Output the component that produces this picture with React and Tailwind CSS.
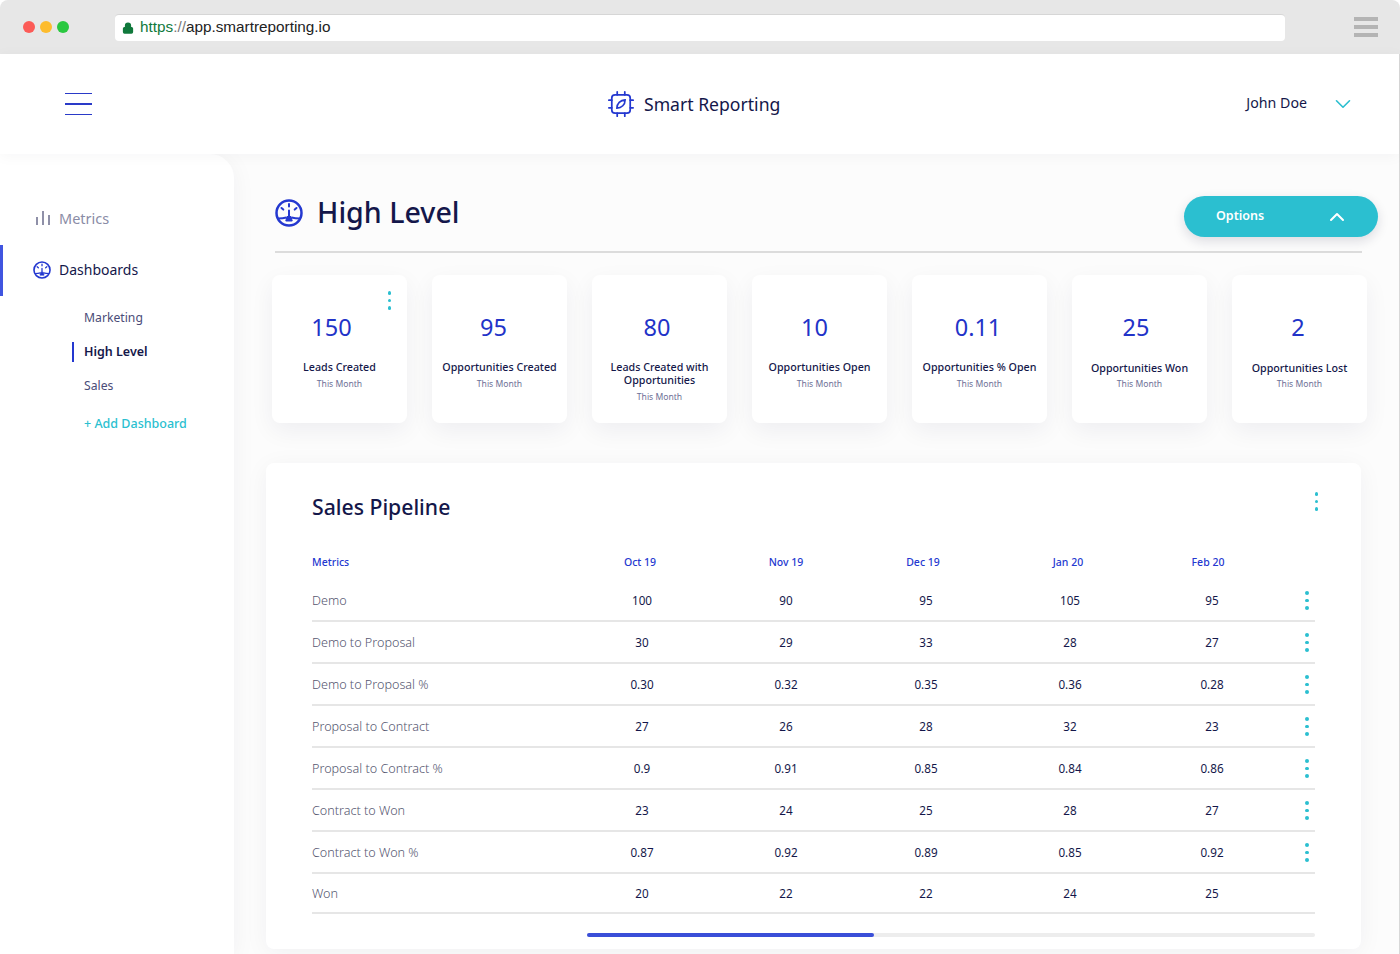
import { ChevronDown, ChevronUp, Lock } from 'lucide-react';

const STATS = [
  { value: '150', label: 'Leads Created', offset: 'mr-[16px]', menu: true },
  { value: '95', label: 'Opportunities Created', offset: 'mr-[12px]' },
  { value: '80', label: 'Leads Created with Opportunities', offset: 'mr-[5px]' },
  { value: '10', label: 'Opportunities Open', offset: 'mr-[10px]' },
  { value: '0.11', label: 'Opportunities % Open', offset: 'mr-[3px]' },
  { value: '25', label: 'Opportunities Won', offset: 'mr-[7px]', low: true },
  { value: '2', label: 'Opportunities Lost', offset: 'mr-[3px]', low: true },
];

const ROWS = [
  ['Demo', '100', '90', '95', '105', '95'],
  ['Demo to Proposal', '30', '29', '33', '28', '27'],
  ['Demo to Proposal %', '0.30', '0.32', '0.35', '0.36', '0.28'],
  ['Proposal to Contract', '27', '26', '28', '32', '23'],
  ['Proposal to Contract %', '0.9', '0.91', '0.85', '0.84', '0.86'],
  ['Contract to Won', '23', '24', '25', '28', '27'],
  ['Contract to Won %', '0.87', '0.92', '0.89', '0.85', '0.92'],
  ['Won', '20', '22', '22', '24', '25'],
];

const MONTHS = ['Oct 19', 'Nov 19', 'Dec 19', 'Jan 20', 'Feb 20'];

function Kebab({ className = '' }) {
  return (
    <div className={`flex flex-col gap-[4px] ${className}`}>
      <span className="block size-[3.5px] rounded-full bg-[#2bbfd0]" />
      <span className="block size-[3.5px] rounded-full bg-[#2bbfd0]" />
      <span className="block size-[3.5px] rounded-full bg-[#2bbfd0]" />
    </div>
  );
}

function GaugeIcon({ className = '' }) {
  return (
    <svg viewBox="0 0 28 28" fill="none" stroke="#2438d0" strokeWidth="2.5" className={className}>
      <circle cx="14" cy="14" r="12.5" />
      <path d="M14 5v2.5M6.5 9l1.8 1.6M21.5 9l-1.8 1.6M14 11.5v6" strokeLinecap="round" strokeWidth="2" />
      <path d="M3 19.5c3 0 6-.3 8.5-1M25 19.5c-3 0-6-.3-8.5-1" strokeWidth="2" />
      <path d="M12 17.5h4l1.2 4.5h-6.4z" fill="#2438d0" strokeWidth="1" strokeLinejoin="round" />
    </svg>
  );
}

function ChipIcon({ className = '' }) {
  return (
    <svg viewBox="0 0 24 24" fill="none" stroke="#2438d0" strokeWidth="1.6" strokeLinecap="round" className={className}>
      <rect x="3.5" y="3.5" width="17" height="17" rx="3" />
      <path d="M8.5 .8v2.7M15.5 .8v2.7M8.5 20.5v2.7M15.5 20.5v2.7M.8 8.5h2.7M.8 15.5h2.7M20.5 8.5h2.7M20.5 15.5h2.7" />
      <path d="M8.2 15.8c0-4.2 3.2-7.4 7.6-7.6 0 4.4-3.2 7.6-7.6 7.6z" strokeWidth="1.5" />
    </svg>
  );
}

function StatCard({ value, label, offset, menu, low }) {
  return (
    <div className="relative flex h-[148px] flex-col items-center rounded-lg bg-white px-2 pt-[35px] shadow-[0_8px_24px_rgba(20,20,60,0.06)]">
      {menu && <Kebab className="absolute right-[16px] top-[16px]" />}
      <div className={`text-[23.5px] leading-[34px] text-[#2233c8] ${offset}`}>{value}</div>
      <div className={`text-center text-[10.7px] font-medium leading-[13px] text-[#14174a] ${low ? 'mt-[18px]' : 'mt-[17px]'}`}>{label}</div>
      <div className={`text-[8.6px] leading-[13px] text-[#6e7096] ${low ? 'mt-[3px]' : 'mt-[4px]'}`}>This Month</div>
    </div>
  );
}

export default function App() {
  return (
    <div className="flex h-[954px] w-[1400px] flex-col overflow-hidden bg-white font-['Noto_Sans',sans-serif]">
      <div className="flex h-[54px] shrink-0 items-center rounded-t-lg bg-[#e7e7e7] font-['Liberation_Sans',sans-serif]">
        <div className="ml-[23px] flex gap-[5px]">
          <span className="size-[12px] rounded-full bg-[#fc5b57]" />
          <span className="size-[12px] rounded-full bg-[#fdbc2e]" />
          <span className="size-[12px] rounded-full bg-[#2ac840]" />
        </div>
        <div className="ml-[46px] flex h-[27px] w-[1170px] items-center rounded-[4px] border-t border-[#d6d6d6] bg-white pl-[7px]">
          <Lock size={12} strokeWidth={2.5} fill="#10793c" className="text-[#10793c]" />
          <span className="ml-[6px] text-[15.3px] text-[#10793c]">https</span>
          <span className="text-[15.3px] text-[#777]">://</span>
          <span className="text-[15.3px] text-[#222]">app.smartreporting.io</span>
        </div>
        <div className="ml-[69px] flex w-[24px] flex-col gap-[4px]">
          <span className="h-[4px] bg-[#b4b4b4]" />
          <span className="h-[4px] bg-[#b4b4b4]" />
          <span className="h-[4px] bg-[#b4b4b4]" />
        </div>
      </div>

      <div className="flex min-h-0 flex-1 flex-col border-r border-[#d8d8d8] bg-[#fcfcfc]">
        <header className="z-20 flex h-[100px] shrink-0 items-center bg-white shadow-[0_2px_14px_rgba(20,20,60,0.04)]">
          <div className="ml-[65px] flex w-[27px] flex-col gap-[9px]">
            <span className="h-[1.5px] bg-[#2a3ac8]" />
            <span className="h-[1.5px] bg-[#2a3ac8]" />
            <span className="h-[1.5px] bg-[#2a3ac8]" />
          </div>
          <div className="ml-[516px] flex items-center">
            <ChipIcon className="size-[26px]" />
            <span className="ml-[10px] pt-[2px] text-[17.6px] leading-none text-[#14174a]">Smart Reporting</span>
          </div>
          <span className="ml-[466px] pb-[2px] text-[14.2px] text-[#14174a]">John Doe</span>
          <ChevronDown size={26} strokeWidth={1.5} className="ml-[23px] text-[#2bbfd0]" />
        </header>

        <div className="flex min-h-0 flex-1">
          <aside className="z-10 w-[234px] shrink-0 rounded-tr-[24px] bg-white pt-[52px] shadow-[0_4px_24px_rgba(20,20,60,0.05)]">
            <div className="flex h-[24px] items-center pl-[36px]">
              <div className="flex items-end gap-[4px]">
                <span className="h-[8px] w-[2px] bg-[#8f90a8]" />
                <span className="h-[14px] w-[2px] bg-[#8f90a8]" />
                <span className="h-[10px] w-[2px] bg-[#8f90a8]" />
              </div>
              <span className="ml-[9px] pt-[2px] text-[14.5px] text-[#8a8ca6]">Metrics</span>
            </div>
            <div className="mt-[15px] flex h-[51px] items-center border-l-[3px] border-[#4055e0] pb-[2px] pl-[30px]">
              <GaugeIcon className="size-[18px]" />
              <span className="ml-[8px] text-[14px] text-[#14174a]">Dashboards</span>
            </div>
            <div className="mt-[10px] flex flex-col pl-[84px] text-[12.5px]">
              <span className="flex h-[24px] items-center text-[12.2px] text-[#4a4c78]">Marketing</span>
              <span className="relative mt-[10px] flex h-[24px] items-center font-semibold text-[#14174a]">
                <span className="absolute -left-[12px] top-[2px] h-[20px] w-[2px] bg-[#2438d0]" />
                High Level
              </span>
              <span className="mt-[10px] flex h-[24px] items-center text-[12.2px] text-[#4a4c78]">Sales</span>
              <span className="mt-[14px] flex h-[24px] items-center font-medium text-[#2bbfd0]">+ Add Dashboard</span>
            </div>
          </aside>

          <main className="min-w-0 flex-1">
            <div className="ml-[41px] mr-[37px] flex h-[99px] items-center justify-between border-b-2 border-[#dcdcdc] pt-[20px]">
              <div className="flex items-center">
                <GaugeIcon className="size-[28px]" />
                <h1 className="ml-[14px] text-[28.6px] font-medium leading-none text-[#14174a]">High Level</h1>
              </div>
              <button className="relative -mr-[16px] mt-[8px] flex h-[41px] w-[194px] items-center justify-between rounded-full bg-[#2bbfd0] pl-[32px] pr-[29px] text-[12.5px] font-semibold text-white shadow-[0_4px_12px_rgba(20,20,60,0.14)]">
                Options
                <ChevronUp size={24} strokeWidth={2} />
              </button>
            </div>

            <div className="ml-[38px] mt-[22px] grid w-[1095px] grid-cols-7 gap-[25px]">
              {STATS.map((stat) => (
                <StatCard key={stat.label} {...stat} />
              ))}
            </div>

            <section className="ml-[32px] mt-[40px] h-[486px] w-[1095px] rounded-lg bg-white px-[46px] pt-[27px] shadow-[0_4px_24px_rgba(20,20,60,0.05)]">
              <div className="flex items-start justify-between">
                <h2 className="text-[21.2px] font-medium leading-[34px] text-[#14174a]">Sales Pipeline</h2>
                <Kebab className="mr-[-3px] mt-[2px]" />
              </div>
              <div className="mt-[29px] w-[1003px]">
                <div className="grid h-[20px] grid-cols-[256px_144px_148px_126px_164px_116px_49px] items-center text-[10.5px] font-medium text-[#2438d0]">
                  <span>Metrics</span>
                  {MONTHS.map((month) => (
                    <span key={month} className="text-center">{month}</span>
                  ))}
                </div>
                <div className="mt-[7px]">
                  {ROWS.map(([name, ...values], i) => (
                    <div
                      key={name}
                      className="grid h-[42px] grid-cols-[258px_144px_144px_136px_152px_132px_37px] items-center border-b-2 border-[#e6e6e6] pt-[1px] last:h-[40px]"
                    >
                      <span className="pt-[2px] text-[12.6px] font-light text-[#555670]">{name}</span>
                      {values.map((value, j) => (
                        <span key={j} className="text-center text-[11.7px] text-[#14174a]">{value}</span>
                      ))}
                      {i < ROWS.length - 1 && <Kebab className="ml-[27px]" />}
                    </div>
                  ))}
                </div>
                <div className="ml-[275px] mt-[19px] h-[4px] w-[728px] rounded-full bg-[#ededed]">
                  <div className="h-full w-[287px] rounded-full bg-[#3a4fd8]" />
                </div>
              </div>
            </section>
          </main>
        </div>
      </div>
    </div>
  );
}
